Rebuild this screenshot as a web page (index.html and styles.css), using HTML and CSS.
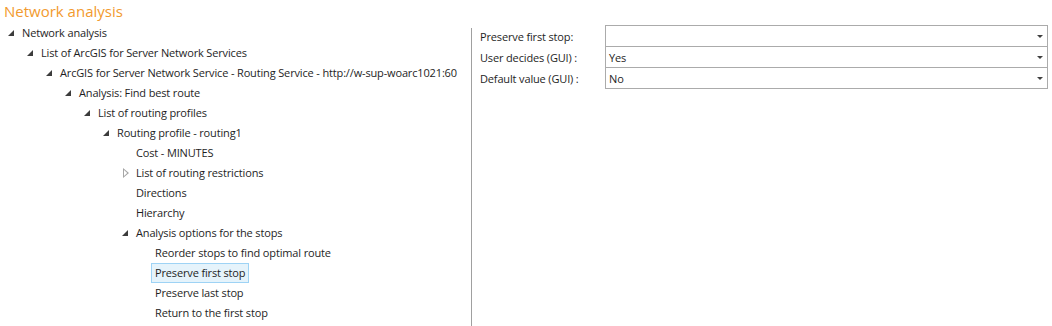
FILE: index.html
```html
<!DOCTYPE html>
<html lang="en">
<head>
    <meta charset="UTF-8">
    <title>Network analysis</title>
    <link rel="stylesheet" href="styles.css">
</head>
<body>

    <div class="title">Network analysis</div>

    <div class="main">
        <!-- Tree -->
        <div class="tree">
            <div class="row l0"><span class="exp open"></span><span class="label">Network analysis</span></div>
            <div class="row l1"><span class="exp open"></span><span class="label">List of ArcGIS for Server Network Services</span></div>
            <div class="row l2"><span class="exp open"></span><span class="label">ArcGIS for Server Network Service - Routing Service - http://w-sup-woarc1021:60</span></div>
            <div class="row l3"><span class="exp open"></span><span class="label">Analysis: Find best route</span></div>
            <div class="row l4"><span class="exp open"></span><span class="label">List of routing profiles</span></div>
            <div class="row l5"><span class="exp open"></span><span class="label">Routing profile - routing1</span></div>
            <div class="row l6"><span class="exp"></span><span class="label">Cost - MINUTES</span></div>
            <div class="row l6"><span class="exp closed"></span><span class="label">List of routing restrictions</span></div>
            <div class="row l6"><span class="exp"></span><span class="label">Directions</span></div>
            <div class="row l6"><span class="exp"></span><span class="label">Hierarchy</span></div>
            <div class="row l6"><span class="exp open"></span><span class="label">Analysis options for the stops</span></div>
            <div class="row l7"><span class="exp"></span><span class="label">Reorder stops to find optimal route</span></div>
            <div class="row l7"><span class="exp"></span><span class="label selected">Preserve first stop</span></div>
            <div class="row l7"><span class="exp"></span><span class="label">Preserve last stop</span></div>
            <div class="row l7"><span class="exp"></span><span class="label">Return to the first stop</span></div>
        </div>

        <div class="divider"></div>

        <!-- Properties -->
        <div class="props">
            <div class="prop-label">Preserve first stop:</div>
            <div class="combo"><span class="value"></span><span class="arrow"></span></div>

            <div class="prop-label">User decides (GUI) :</div>
            <div class="combo"><span class="value">Yes</span><span class="arrow"></span></div>

            <div class="prop-label">Default value (GUI) :</div>
            <div class="combo"><span class="value">No</span><span class="arrow"></span></div>
        </div>
    </div>

</body>
</html>
```

FILE: styles.css
```css
body {
    margin: 0;
    font-family: "Open Sans", "Noto Sans", sans-serif;
    font-size: 11px;
    letter-spacing: -0.15px;
    color: #1e1e1e;
    background: white;
    width: 1052px;
    height: 326px;
    overflow: hidden;
}
.title {
    height: 23px;
    line-height: 22px;
    padding-left: 4px;
    font-size: 15px;
    letter-spacing: 0;
    color: #f29a2e;
}
.main {
    display: flex;
    height: 303px;
}
.tree {
    width: 471px;
    flex: none;
    white-space: nowrap;
    overflow: hidden;
}
.row {
    height: 20px;
    display: flex;
    align-items: center;
}
.l0 { padding-left: 3px; }
.l1 { padding-left: 22px; }
.l2 { padding-left: 41px; }
.l3 { padding-left: 60px; }
.l4 { padding-left: 79px; }
.l5 { padding-left: 98px; }
.l6 { padding-left: 117px; }
.l7 { padding-left: 136px; }
.exp {
    width: 15px;
    height: 20px;
    flex: none;
    position: relative;
}
.exp.open::after {
    content: "";
    position: absolute;
    left: 5px;
    top: 7px;
    width: 0;
    height: 0;
    border-left: 6px solid transparent;
    border-bottom: 6px solid #3c3c3c;
}
.exp.closed::after {
    content: "";
    position: absolute;
    left: 6px;
    top: 5px;
    width: 6px;
    height: 10px;
    background: #a6a6a6;
    clip-path: polygon(0 0, 100% 50%, 0 100%, 0 0, 1px 2px, 1px calc(100% - 2px), calc(100% - 1.8px) 50%, 1px 2px);
}
.label {
    padding: 0 3px;
    border: 1px solid transparent;
    height: 18px;
    line-height: 18px;
}
.label.selected {
    background: #e5f3fb;
    border-color: #9ed3f5;
}
.divider {
    width: 1px;
    flex: none;
    margin-top: 5px;
    background: #a0a0a0;
}
.props {
    flex: 1;
    display: grid;
    grid-template-columns: 125px 443px;
    grid-auto-rows: 21px;
    padding: 2px 0 0 8px;
    align-content: start;
}
.prop-label {
    display: flex;
    align-items: center;
    padding-top: 1px;
}
.combo {
    border: 1px solid #ababab;
    box-sizing: border-box;
    height: 22px;
    display: flex;
    align-items: center;
    padding: 0 4px 0 3px;
}
.value {
    flex: 1;
}
.arrow {
    width: 0;
    height: 0;
    border-left: 3px solid transparent;
    border-right: 3px solid transparent;
    border-top: 3px solid #404040;
    margin-top: 1px;
}
```
